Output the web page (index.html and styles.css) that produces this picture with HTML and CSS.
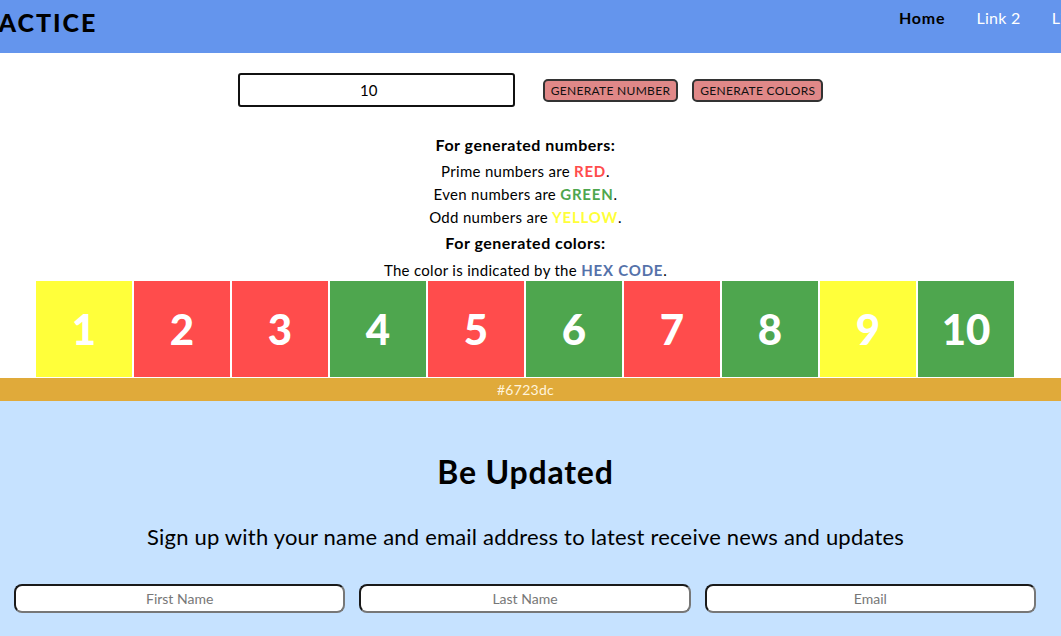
FILE: index.html
```html
<!DOCTYPE html>
<html>
<head>
<meta charset="utf-8">
<link rel="stylesheet" href="styles.css">
</head>
<body>
<header class="topbar">
  <h1 class="brand">JS PRACTICE</h1>
  <nav class="nav">
    <a class="nav-link active">Home</a>
    <a class="nav-link">Link 2</a>
    <a class="nav-link">Link 3</a>
  </nav>
</header>
<main class="main">
  <div class="controls">
    <input class="num-input" type="number" value="10">
    <button class="btn">GENERATE NUMBER</button>
    <button class="btn">GENERATE COLORS</button>
  </div>
  <div class="legend">
    <p class="legend-head">For generated numbers:</p>
    <p class="legend-line">Prime numbers are <b class="c-red">RED</b>.</p>
    <p class="legend-line">Even numbers are <b class="c-green">GREEN</b>.</p>
    <p class="legend-line">Odd numbers are <b class="c-yellow">YELLOW</b>.</p>
    <p class="legend-head">For generated colors:</p>
    <p class="legend-line">The color is indicated by the <b class="c-blue">HEX CODE</b>.</p>
  </div>
  <div class="boxes">
    <div class="box yellow">1</div>
    <div class="box red">2</div>
    <div class="box red">3</div>
    <div class="box green">4</div>
    <div class="box red">5</div>
    <div class="box green">6</div>
    <div class="box red">7</div>
    <div class="box green">8</div>
    <div class="box yellow">9</div>
    <div class="box green">10</div>
  </div>
  <div class="hexbar">#6723dc</div>
</main>
<section class="signup">
  <h2 class="signup-title">Be Updated</h2>
  <p class="signup-sub">Sign up with your name and email address to latest receive news and updates</p>
  <form class="signup-form">
    <input class="field" type="text" placeholder="First Name">
    <input class="field" type="text" placeholder="Last Name">
    <input class="field" type="text" placeholder="Email">
  </form>
</section>
</body>
</html>
```

FILE: styles.css
```css
html { overflow-x: hidden; }
body {
  margin: 0;
  font-family: "Lato", "Open Sans", sans-serif;
  color: #000;
  background: #c6e2ff;
}
.topbar {
  background: #6495ed;
  height: 53px;
  display: flex;
  justify-content: space-between;
  align-items: flex-start;
  white-space: nowrap;
}
.brand {
  margin: 8px 0 0 -74px;
  font-size: 25px;
  font-weight: 900;
  letter-spacing: 2px;
  line-height: 28px;
}
.nav {
  display: flex;
  gap: 31px;
  margin-right: -35px;
  padding-top: 8px;
}
.nav-link {
  color: #fff;
  font-size: 16px;
  line-height: 20px;
  letter-spacing: 0.3px;
}
.nav-link.active { color: #000; font-weight: 700; letter-spacing: 0.8px; }
.main { background: #fff; }
.controls {
  display: flex;
  justify-content: center;
  align-items: center;
  padding: 20px 0 0 0;
  margin-left: 0;
  height: 34px;
}
.num-input {
  width: 277px;
  height: 34px;
  box-sizing: border-box;
  border: 2px solid #111;
  border-radius: 3px;
  text-align: center;
  font-family: "Lato", sans-serif;
  font-size: 15px;
  margin-right: 28px;
}
.btn {
  background: #e08888;
  border: 2px solid #333;
  border-radius: 5px;
  height: 23px;
  padding: 0 6px;
  font-family: "Lato", sans-serif;
  font-size: 12px;
  letter-spacing: 0.3px;
  color: #111;
  margin-right: 14px;
}
.btn:last-child { margin-right: 0; }
.legend {
  text-align: center;
  padding: 26px 10px 0 0;
  font-size: 15px;
  letter-spacing: 0.3px;
}
.legend p { margin: 0; line-height: 23px; }
.legend .legend-head {
  font-weight: 700;
  font-size: 16px;
  letter-spacing: 0.5px;
  margin: 2px 0 0;
}
.legend .legend-head:first-child { margin-top: 0; }
.legend .legend-head + .legend-line { margin-top: 4px; }
.legend .legend-line:last-child { margin-top: 5px; margin-bottom: -1px; }
.c-red { color: #ff4c4c; letter-spacing: 0.8px; }
.c-green { color: #4ea64e; letter-spacing: 0.8px; }
.c-yellow { color: #ffff3a; letter-spacing: 0.8px; }
.c-blue { color: #5572aa; letter-spacing: 0.8px; }
.boxes {
  display: flex;
  gap: 2px;
  padding: 0 0 1px 36px;
}
.box {
  width: 96px;
  height: 96px;
  display: flex;
  align-items: center;
  justify-content: center;
  color: #fff;
  font-weight: 900;
  font-size: 42px;
}
.yellow { background: #ffff3a; }
.red { background: #ff4c4c; }
.green { background: #4ea64e; }
.hexbar {
  background: #e0aa3a;
  height: 23px;
  line-height: 23px;
  text-align: center;
  color: #fff4dc;
  font-size: 14px;
  padding-right: 10px;
  letter-spacing: 0.3px;
}
.signup {
  text-align: center;
  padding: 51px 0 20px;
}
.signup-title {
  margin: 0 10px 0 0;
  font-size: 32px;
  font-weight: 700;
  letter-spacing: 0.8px;
  line-height: 40px;
}
.signup-sub {
  margin: 30px 10px 0 0;
  font-size: 22px;
  letter-spacing: 0.2px;
  line-height: 30px;
}
.signup-form {
  display: flex;
  gap: 14px;
  padding: 0 25px 0 14px;
  margin-top: 32px;
}
.field {
  flex: 1;
  height: 29px;
  box-sizing: border-box;
  border: 2px solid #777;
  border-top-color: #1a1a1a;
  border-left-color: #1a1a1a;
  border-radius: 8px;
  text-align: center;
  font-family: "Lato", sans-serif;
  font-size: 14px;
}
.field::placeholder { color: #777; }
```
